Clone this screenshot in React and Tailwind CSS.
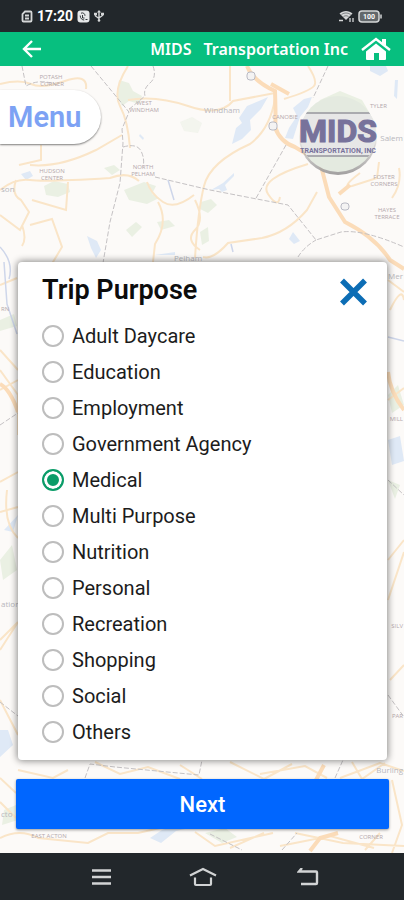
import React, { useState } from "react";

const purposes = [
  "Adult Daycare",
  "Education",
  "Employment",
  "Government Agency",
  "Medical",
  "Multi Purpose",
  "Nutrition",
  "Personal",
  "Recreation",
  "Shopping",
  "Social",
  "Others",
];

function StatusBar() {
  return (
    <div className="flex h-8 shrink-0 items-center justify-between bg-[#22272b] pl-[21px] pr-[22px] text-white">
      <div className="flex items-center gap-1">
        <svg width="12" height="13" viewBox="0 0 12 13" fill="none" stroke="#d5d7d8" strokeWidth="1.8">
          <path d="M4 1.500h5.500a1 1 0 0 1 1 1v8a1 1 0 0 1-1 1h-7a1 1 0 0 1-1-1V4z" />
          <path d="M4 5.500h4M4 8.500h4" />
        </svg>
        <span className="font-['Roboto',sans-serif] text-[14px] font-bold leading-4">17:20</span>
        <svg width="13" height="13" viewBox="0 0 13 13">
          <rect x="0.500" y="0.500" width="12" height="12" rx="3" fill="#e6e8e9" />
          <path d="M4 3.200c2-1 4 .4 4 2.600M3.200 5.500c0 3 2 4.500 4 4.500M5.500 5v3h2M8.500 9.500h2" fill="none" stroke="#33383c" strokeWidth="1" />
        </svg>
        <svg width="10" height="12" viewBox="0 0 10 12" fill="none" stroke="#d5d7d8" strokeWidth="1.400">
          <path d="M5 1v10M1.500 4v2L5 8.500M8.500 4v1.500L5 8" />
          <path d="M5 0 3 2.500h4z" fill="#d5d7d8" stroke="none" />
          <circle cx="5" cy="10.500" r="1.300" fill="#d5d7d8" stroke="none" />
          <path d="M0 4h3M7 4h3" strokeWidth="2.500" />
        </svg>
      </div>
      <div className="flex items-center gap-1">
        <svg width="16" height="12" viewBox="0 0 16 12">
          <path d="M1.500 3.500C5 0 11 0 14.500 3.500L8 10z" fill="#d5d7d8" />
          <path d="M3.500 4.500c3-2 6-2 9 0M5.500 6.500c2-1 3-1 5 0" fill="none" stroke="#22272b" strokeWidth=".5" />
          <path d="M1 10.500h4M12 8v4M15 8v4" stroke="#d5d7d8" strokeWidth="1.300" />
        </svg>
        <svg width="24" height="13" viewBox="0 0 24 13">
          <rect x="1" y="1" width="20" height="11" rx="3" fill="#63686b" stroke="#d5d7d8" strokeWidth="1.500" />
          <path d="M23 4.500v4" stroke="#d5d7d8" strokeWidth="1.500" />
          <text x="11" y="9" textAnchor="middle" fontSize="7" fontWeight="700" fill="#fff" fontFamily="Roboto, sans-serif">100</text>
        </svg>
      </div>
    </div>
  );
}

function Header() {
  return (
    <header className="flex h-[34px] shrink-0 items-center bg-[#07bf7f] pl-[22px] pr-3 text-white">
      <button type="button" aria-label="Back">
        <svg width="20" height="18" viewBox="0 0 20 18" fill="none" stroke="#fff" strokeWidth="2.400">
          <path d="M19 9H2.500M10 1 2 9l8 8" />
        </svg>
      </button>
      <h1 className="ml-auto flex gap-3 font-['Noto_Sans',sans-serif] text-[16px] font-semibold leading-6">
        <span>MIDS</span>
        <span>Transportation Inc</span>
      </h1>
      <button type="button" aria-label="Home" className="ml-3">
        <svg width="32" height="24" viewBox="0 0 32 24">
          <path d="M16 6.500 26 14.500V22a1 1 0 0 1-1 1h-6v-7h-5v7H7a1 1 0 0 1-1-1v-7.500z" fill="#fff" />
          <path d="M2 13 16 2l14 11" fill="none" stroke="#fff" strokeWidth="2.400" />
          <path d="M22 2h4v7l-4-3z" fill="#fff" />
        </svg>
      </button>
    </header>
  );
}

function MapBackground() {
  return (
    <svg
      className="absolute inset-0 h-full w-full"
      viewBox="0 66 404 787"
      preserveAspectRatio="xMidYMid slice"
      fill="none"
      aria-hidden="true"
    >
      <rect y="66" width="404" height="787" fill="#fcfaf8" />
      <g fill="#eaf0e3">
        <path d="M119 80l10 3 4 8 9 5-3 8-10-3-7 5-5-10z" />
        <path d="M44 186l10-5 14 3 2 8-12 5-12-2z" />
        <path d="M124 190l20-8 12 4-4 8 7 4-12 6-18-4z" />
        <path d="M104 168l10-3 6 5-8 5zM126 230l10-8 6 5-10 10zM157 222l12-2 6 6-14 4z" />
        <path d="M201 202l10-3 6 6-9 8-8-4zM200 232l8-5 1 14-7 4z" />
        <path d="M180 122l12-5 10 6-4 10-14-2z" opacity=".5" />
        <path d="M320 100l20-9 22 9 7 12-60 3z" />
        <path d="M388 395l10-10 6 20-12 8zM0 560l12-15 5 25-14 10zM4 810l12-5 2 15-16 5zM205 833l20-5 12 9-15 6zM388 480l12 5-5 14zM0 320l14-6 3 12-17 5z" />
      </g>
      <g fill="#dfe9f6">
        <path d="M268 97l-9 4-12 5-8 12 3 5-6 5-4 16 10-5 9-9-1-10 11-11z" />
        <path d="M304 99l8-2-4 10-8 10-7 22-8-1 4-10 8-12-4-8z" />
        <path d="M370 66l16 0 2 5-8 5-10-5zM395 80l3 0-1 19-3-3z" />
        <path d="M21 174l9-3 3 5-7 4zM211 190l12-7 11-10 0 3-9 9 2 5-5 2-3-3zM289 239l4-7 7 9-6 3zM87 236l10 5 4 9-5 8-5-10z" />
        <path d="M140 134l4 4-1 2-4-4zM155 255l20-3 0 3zM388 440l12-4 4 25-12 4zM4 530l14-15-5 17zM0 730l8 0 5 15-13 12zM150 838l12-8 22-7 10 4-18 4-15 12z" />
      </g>
      <g stroke="#fae5c8" strokeWidth="2">
        <path d="M0 84q20-5 31 0t34-3 21 8M128 66q-16 25-8 40t10 42M128 100q28-5 60 6t45-5l42-8M230 66v35M275 99q-5 30-25 45-40 18-46 42t-9 72M122 135l-26 15q-37 18-66 15M41 145v15l-22 5M0 190q15-12 30-10t80-2q18-7 29 3M16 180q-5 15 5 20l8 12-9 18-20-15M32 200l34 10 2-28M30 225l22-6 10 28-12 20M22 225q5 14 0 21M147 182q4 12 16 20t31-7M158 202q11 20-3 42l-2 18M195 200q10 20 0 30t5 20M262 238q25-5 45-28l10-18M262 238l-34 5q-15 17-25 14M308 164q-50 15-40 30t12 3M308 66q10 15 6 20t-30 13M360 173q-20 15-8 13l25-8 2-16M392 198q10-14 7-30" />
        <path d="M0 285l17-7M0 350l18 20M0 370l18 25 0 40M0 390l18-10M0 482l18-10M0 650l18-28M0 640l18-18M7 490q-4 34 11 48M388 280l16 12M390 310q12-25 14-10M388 400l16-12M388 600l16-48M388 560l16-20M390 680l14-15M0 512l18-5M0 700l18 35M18 770l35 8 15-8M95 762l25 12 28-7 32 12M180 765l22 14M230 762l34 17 28-15M260 774l45-8 22 12M340 778l40-15 24 8M352 762l10 17 23-16M0 838q20-10 38 0l50 5 20-10 30 0 22-5M195 832l20 14 58-13M230 848l34-15M280 846l50-10 44 12M295 833l48 10 61 3M380 833l-15 17M392 780l10 45-10 28M0 778l16 15M0 802l16 16" />
      </g>
      <g stroke="#fbdcb9" strokeWidth="4">
        <path d="M247 66q6 15 28 25 1 30 0 36 5 15 20 20l25 15 9 35 16 25q30 15 45 38l14 9" />
        <path d="M271 84l18 10M339 194l11-9M0 384q10 5 18 28M388 372q2 20 16 38M324 765l-8 15M310 851l10-13 18-5" />
      </g>
      <g stroke="#c5c2c4" strokeWidth="1" strokeDasharray="5 2">
        <path d="M22 66l4 20q14-8 31-1M91 66l38 46-7 17 1 14-3 40-10 39-7 41M153 66q4 11-3 17t-5 13l-18 15M123 147q14-4 18 4t2 16M155 177l55 13 78 15 28 35 25-8q22-3 63 15M286 145l-31 55M328 66l-15 32M298 257q6-10 18-17M388 480l16 15M388 695l16 22M0 702l18 14M85 778l5-14 25 3 84 8 3-15M335 778l8-18M210 834l32 16M282 850l15-17M0 425l18-12" />
      </g>
      <g stroke="#ced6ea" strokeWidth="1.500">
        <path d="M0 247q14 15 9 32M4 262l3 42 10 30M388 337l16 4M168 180l6 20M231 244l2 8" />
      </g>
      <g stroke="#b9bac4" fill="#f4f3f3" strokeWidth="1">
        <rect x="247" y="72" width="8" height="8" rx="3" />
        <rect x="269" y="122" width="8" height="8" rx="3" />
        <rect x="341" y="203" width="8" height="7" rx="3" />
      </g>
      <g fontFamily="'Open Sans', sans-serif" fontSize="6" fill="#b4a8ac" textAnchor="middle">
        <text x="51" y="79">POTASH</text><text x="52" y="86">CORNER</text>
        <text x="144" y="105">WEST</text><text x="144" y="112">WINDHAM</text>
        <text x="52" y="173">HUDSON</text><text x="52" y="180">CENTER</text>
        <text x="143" y="169">NORTH</text><text x="143" y="176">PELHAM</text>
        <text x="285" y="119">CANOBIE</text>
        <text x="384" y="179">FOSTER</text><text x="384" y="186">CORNERS</text>
        <text x="387" y="212">HAYES</text><text x="387" y="219">TERRACE</text>
        <text x="49" y="838">EAST ACTON</text>
        <text x="371" y="839">CORNER</text>
      </g>
      <g fontFamily="'Open Sans', sans-serif" fontSize="6" fill="#b4a8ac">
        <text x="370" y="108">TYLER</text>
        <text x="1" y="311">RN</text>
        <text x="403" y="421" textAnchor="end">MILL</text>
        <text x="403" y="628" textAnchor="end">SILV</text>
        <text x="403" y="718" textAnchor="end">PAR</text>
      </g>
      <g fontFamily="'Open Sans', sans-serif" fontSize="8" fill="#b8b8bd">
        <text x="204" y="113">Windham</text>
        <text x="403" y="141" textAnchor="end">Salem</text>
        <text x="174" y="261">Pelham</text>
        <text x="1" y="192">son</text>
        <text x="403" y="279" textAnchor="end">Mer</text>
        <text x="1" y="607">ation</text>
        <text x="403" y="773" textAnchor="end">Burling</text>
        <text x="1" y="817">cto</text>
      </g>
    </svg>
  );
}

function Logo() {
  return (
    <svg className="mr-[26px] mt-1 shrink-0" width="80" height="84" viewBox="298 94 80 84" role="img" aria-label="MIDS Transportation, Inc">
      <defs>
        <clipPath id="badge"><circle cx="338" cy="134" r="38" /></clipPath>
        <linearGradient id="rim" x1="0" y1="0" x2="0" y2="1">
          <stop offset="0.400" stopColor="#aaa8a8" stopOpacity="0" />
          <stop offset="1" stopColor="#a19f9f" />
        </linearGradient>
      </defs>
      <circle cx="338" cy="136" r="39" fill="url(#rim)" />
      <g clipPath="url(#badge)">
        <rect x="298" y="94" width="80" height="84" fill="#e4eae0" />
        <rect x="298" y="113" width="80" height="44" fill="#e7e7e7" />
        <path d="M298 113h80M298 156h80" stroke="#96969d" strokeWidth="1.500" />
      </g>
      <g fill="#77729b" textAnchor="middle" fontWeight="700" fontFamily="Roboto, sans-serif">
        <text x="338" y="142" fontSize="32" stroke="#77729b" strokeWidth="1.200">MIDS</text>
        <text x="338" y="153" fontSize="7">TRANSPORTATION, INC</text>
      </g>
    </svg>
  );
}

function PurposeCard() {
  const [selected, setSelected] = useState("Medical");
  return (
    <section className="relative ml-[18px] mr-[17px] rounded-[4px] bg-white px-6 py-[10px] shadow-[0_0_7px_1px_rgba(0,0,0,0.45)]">
      <div className="flex h-9 items-center justify-between">
        <h2 className="text-[27px] font-semibold leading-9 text-[#0c0c0c]">Trip Purpose</h2>
        <button type="button" aria-label="Close" className="-mr-1 mt-1">
          <svg width="27" height="28" viewBox="0 0 27 28" fill="none" stroke="#0c6db5" strokeWidth="5.500">
            <path d="M2 2.500l23 23M25 2.500l-23 23" />
          </svg>
        </button>
      </div>
      <fieldset aria-label="Trip Purpose" className="mt-[10px]">
        {purposes.map((purpose) => (
          <label key={purpose} className="flex h-9 items-center gap-2 text-[20px] leading-6 text-[#1c1c1c]">
            <input
              type="radio"
              name="purpose"
              value={purpose}
              checked={selected === purpose}
              onChange={() => setSelected(purpose)}
              className="h-[22px] w-[22px] shrink-0 appearance-none rounded-full border-2 border-[#bdbdbd] bg-white checked:border-[#0a9c68] checked:bg-[#0a9c68] checked:shadow-[inset_0_0_0_3px_white]"
            />
            <span>{purpose}</span>
          </label>
        ))}
      </fieldset>
    </section>
  );
}

function NavBar() {
  return (
    <nav className="flex h-[47px] shrink-0 items-center justify-between bg-[#22272b] pl-[91px] pr-[85px]">
      <button type="button" aria-label="Recent apps">
        <svg width="21" height="18" viewBox="0 0 21 18" stroke="#d2d4d5" strokeWidth="2.400">
          <path d="M1 2.500h19M1 9h19M1 15.500h19" />
        </svg>
      </button>
      <button type="button" aria-label="Home screen">
        <svg width="32" height="20" viewBox="0 0 32 20" fill="none" stroke="#d2d4d5" strokeWidth="2.200">
          <path d="M1 8.500 14 2l13 6.500M6 10.500V17q0 1 1 1h14q1 0 1-1v-6.500" />
        </svg>
      </button>
      <button type="button" aria-label="Go back">
        <svg width="22" height="18" viewBox="0 0 22 18" fill="none" stroke="#d2d4d5" strokeWidth="2.400">
          <path d="M5 0 2 3.500H19a1 1 0 0 1 1 1V15a1 1 0 0 1-1 1H4" />
        </svg>
      </button>
    </nav>
  );
}

export default function App() {
  return (
    <div className="flex min-h-screen flex-col font-['Roboto',sans-serif]">
      <StatusBar />
      <Header />
      <main className="relative flex-1 overflow-hidden">
        <MapBackground />
        <div className="relative flex h-[196px] items-start justify-between pt-6">
          <button
            type="button"
            className="h-[54px] rounded-r-full bg-white pl-2 pr-5 font-['Roboto',sans-serif] text-[29px] font-semibold leading-10 text-[#7da2f4] shadow-[0_1px_2px_rgba(0,0,0,0.5)]"
          >
            Menu
          </button>
          <Logo />
        </div>
        <PurposeCard />
        <div className="relative mb-6 ml-4 mr-[15px] mt-[19px]">
          <button
            type="button"
            className="h-[50px] w-full rounded-[2px] bg-[#0066ff] text-[22px] font-medium text-white shadow-[0_1px_3px_rgba(0,0,0,0.4)]"
          >
            Next
          </button>
        </div>
      </main>
      <NavBar />
    </div>
  );
}
